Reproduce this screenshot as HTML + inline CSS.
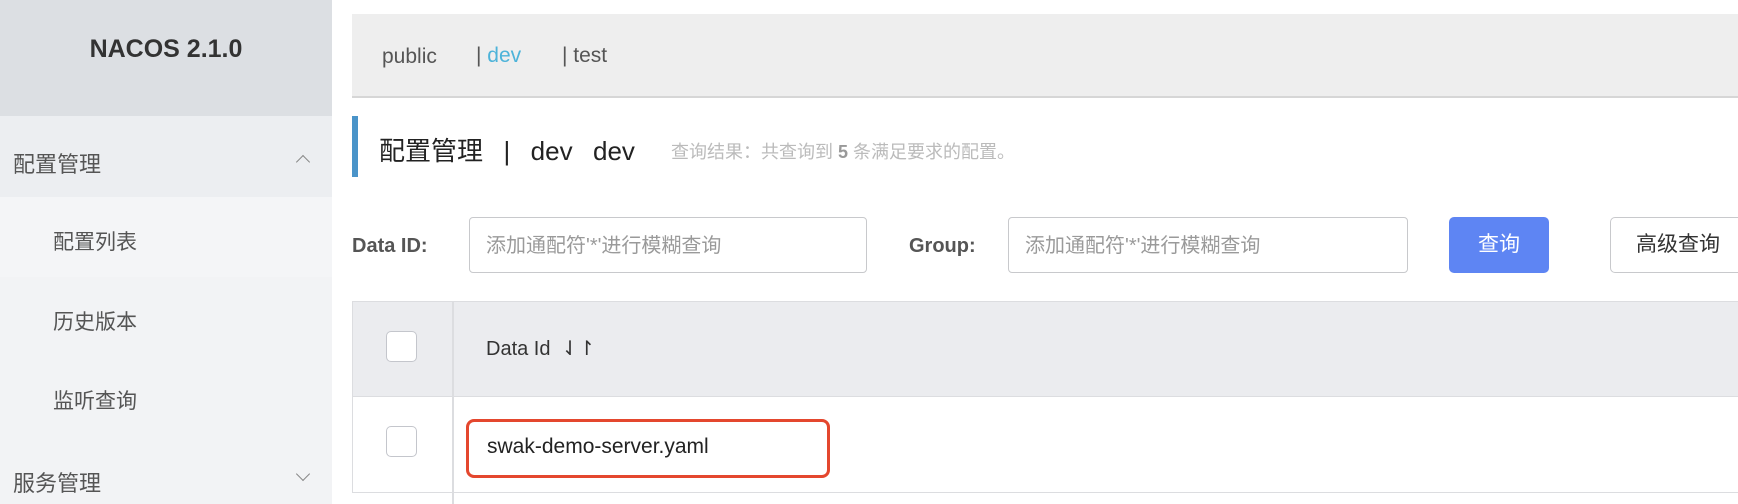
<!DOCTYPE html>
<html><head><meta charset="utf-8"><style>
*{margin:0;padding:0;box-sizing:border-box}
body{width:1738px;height:504px;overflow:hidden;background:#fff;position:relative;font-family:"Liberation Sans","Noto Sans CJK SC",sans-serif;color:#333}
.a{position:absolute;white-space:nowrap}
.side{left:0;top:0;width:332px;height:504px;background:#f2f3f5}
.chev{width:10px;height:10px;border-left:1.5px solid #888;border-top:1.5px solid #888;position:absolute}
.cb{position:absolute;width:31px;height:31px;border:1.5px solid #c4c6cc;border-radius:5px;background:#fff}
.inp{position:absolute;border:1.5px solid #c8c9cc;border-radius:4px;background:#fff;height:56px;top:217px;font-size:20px;color:#9a9a9a;padding-left:16px;line-height:56px}
</style></head><body>
<div class="a side"></div>
<div class="a" style="left:0;top:0;width:332px;height:116px;background:#dcdfe3"></div>
<div class="a" style="left:0;width:332px;top:35px;text-align:center;font-weight:bold;font-size:25px;color:#333">NACOS 2.1.0</div>
<div class="a" style="left:0;top:116px;width:332px;height:81px;background:#eceef1"></div>
<div class="a" style="left:13px;top:147px;font-size:22px;color:#555">配置管理</div>
<div class="chev" style="left:298px;top:157px;transform:rotate(45deg)"></div>
<div class="a" style="left:0;top:197px;width:332px;height:80px;background:#f4f5f7"></div>
<div class="a" style="left:53px;top:226px;font-size:21px;color:#555">配置列表</div>
<div class="a" style="left:53px;top:306px;font-size:21px;color:#555">历史版本</div>
<div class="a" style="left:53px;top:385px;font-size:21px;color:#555">监听查询</div>
<div class="a" style="left:13px;top:466px;font-size:22px;color:#555">服务管理</div>
<div class="chev" style="left:298px;top:469px;transform:rotate(225deg)"></div>

<div class="a" style="left:352px;top:14px;width:1386px;height:84px;background:#eeeeee;border-bottom:2px solid #d6d6d6"></div>
<div class="a" style="left:382px;top:45px;font-size:21px;color:#555">public</div>
<div class="a" style="left:476px;top:44px;font-size:21px;color:#555">| <span style="color:#4db3d9">dev</span></div>
<div class="a" style="left:562px;top:44px;font-size:21px;color:#555">| test</div>

<div class="a" style="left:352px;top:116px;width:6px;height:61px;background:#4a94c9"></div>
<div class="a" style="left:379px;top:131px;font-size:26px;color:#222;word-spacing:3px">配置管理 &nbsp;|&nbsp; dev &nbsp;dev</div>
<div class="a" style="left:671px;top:138px;font-size:18px;color:#bbb">查询结果：共查询到 <b style="color:#999">5</b> 条满足要求的配置。</div>

<div class="a" style="left:352px;top:235px;font-size:20px;font-weight:bold;color:#555">Data ID:</div>
<div class="inp" style="left:469px;width:398px">添加通配符'*'进行模糊查询</div>
<div class="a" style="left:909px;top:235px;font-size:20px;font-weight:bold;color:#555">Group:</div>
<div class="inp" style="left:1008px;width:400px">添加通配符'*'进行模糊查询</div>
<div class="a" style="left:1449px;top:217px;width:100px;height:56px;background:#5e85f3;border-radius:5px;color:#fff;font-size:21px;text-align:center;line-height:56px">查询</div>
<div class="a" style="left:1610px;top:217px;width:140px;height:56px;border:1.5px solid #c8c9cc;border-radius:5px;color:#333;font-size:21px;padding-left:25px;line-height:53px">高级查询</div>

<div class="a" style="left:352px;top:301px;width:1386px;height:96px;background:#ebecef;border-top:1.5px solid #dcdde0;border-bottom:1.5px solid #dcdde0;border-left:1.5px solid #dcdde0"></div>
<div class="a" style="left:352px;top:397px;width:1386px;height:96px;border-left:1.5px solid #dcdde0;border-bottom:1.5px solid #dcdde0"></div>
<div class="a" style="left:452px;top:301px;width:1.5px;height:203px;background:#dcdde0"></div>
<div class="cb" style="left:386px;top:331px"></div>
<div class="a" style="left:486px;top:336px;font-size:20px;color:#333">Data Id &nbsp;⇃↾</div>
<div class="cb" style="left:386px;top:426px"></div>
<div class="a" style="left:466px;top:419px;width:364px;height:59px;border:3.5px solid #e4472e;border-radius:8px"></div>
<div class="a" style="left:487px;top:435px;font-size:21px;color:#222">swak-demo-server.yaml</div>
</body></html>
